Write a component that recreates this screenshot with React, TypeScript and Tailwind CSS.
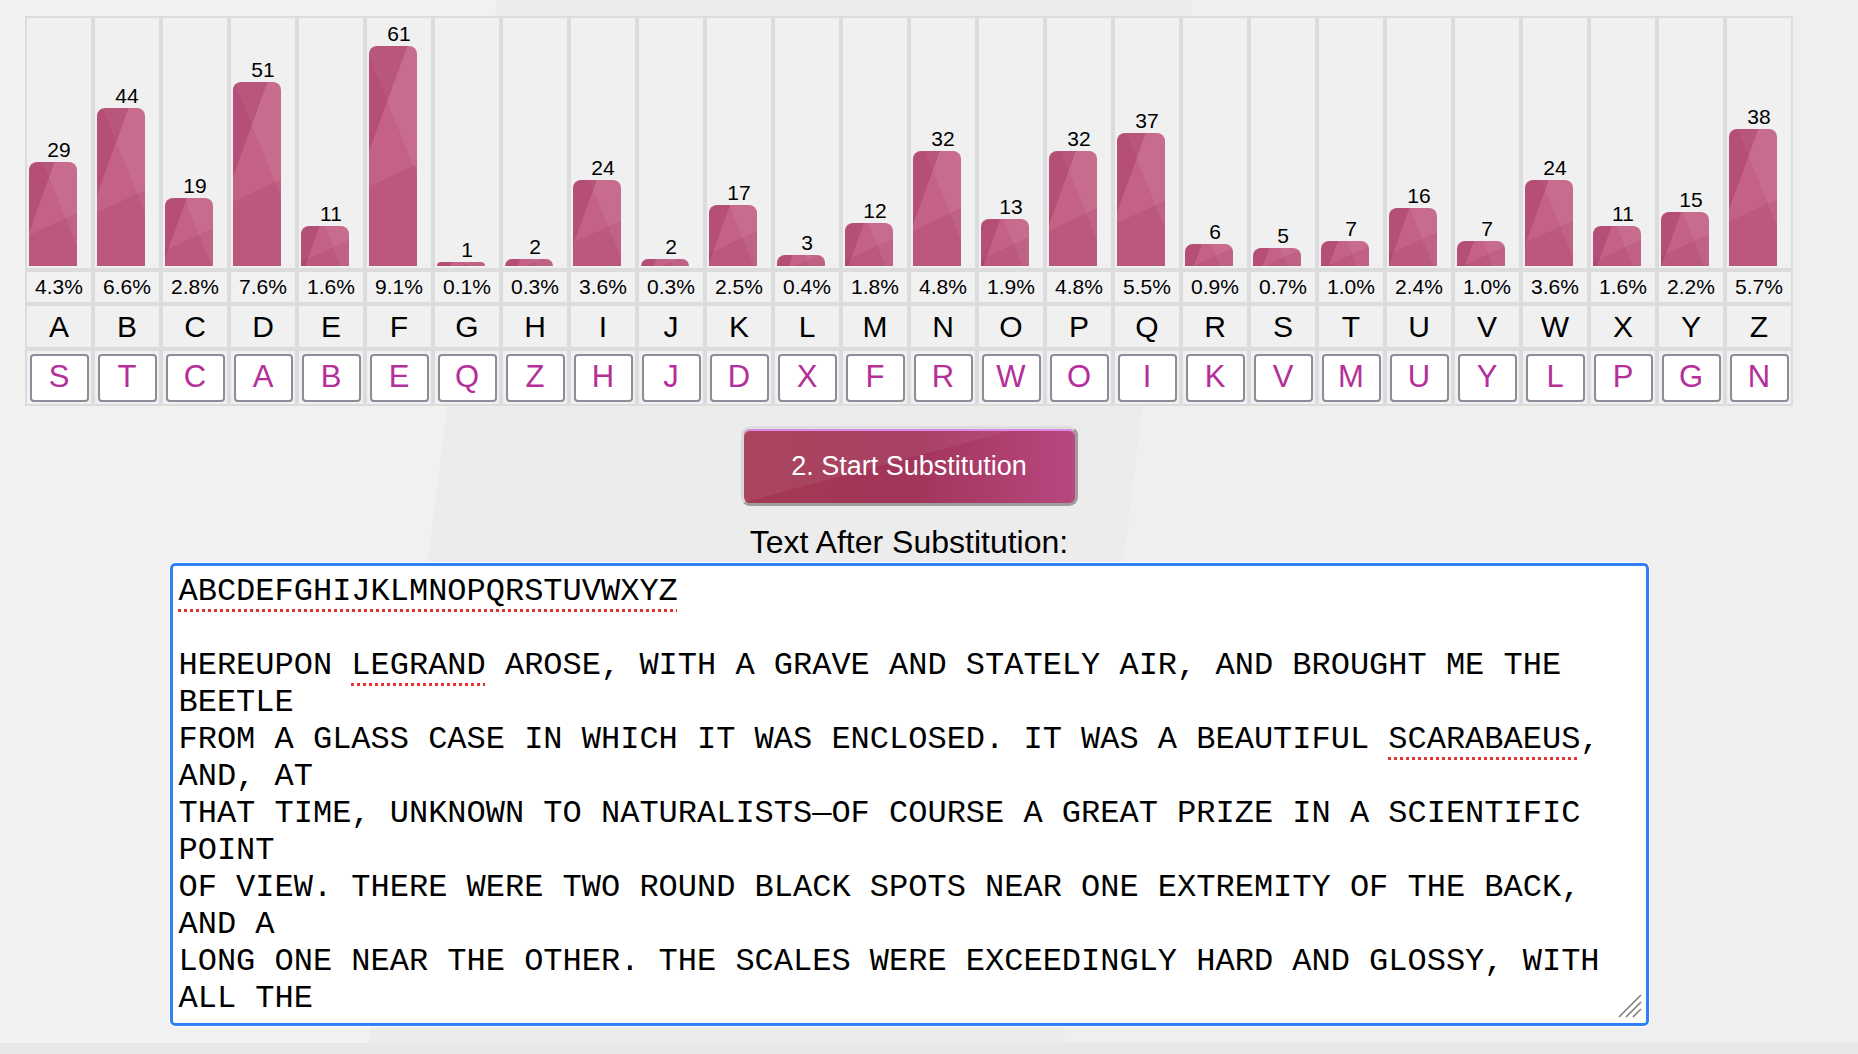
import React from 'react';

type Row = [string, number, string, string];

const rows: Row[] = [
  ['A', 29, '4.3%', 'S'],
  ['B', 44, '6.6%', 'T'],
  ['C', 19, '2.8%', 'C'],
  ['D', 51, '7.6%', 'A'],
  ['E', 11, '1.6%', 'B'],
  ['F', 61, '9.1%', 'E'],
  ['G', 1, '0.1%', 'Q'],
  ['H', 2, '0.3%', 'Z'],
  ['I', 24, '3.6%', 'H'],
  ['J', 2, '0.3%', 'J'],
  ['K', 17, '2.5%', 'D'],
  ['L', 3, '0.4%', 'X'],
  ['M', 12, '1.8%', 'F'],
  ['N', 32, '4.8%', 'R'],
  ['O', 13, '1.9%', 'W'],
  ['P', 32, '4.8%', 'O'],
  ['Q', 37, '5.5%', 'I'],
  ['R', 6, '0.9%', 'K'],
  ['S', 5, '0.7%', 'V'],
  ['T', 7, '1.0%', 'M'],
  ['U', 16, '2.4%', 'U'],
  ['V', 7, '1.0%', 'Y'],
  ['W', 24, '3.6%', 'L'],
  ['X', 11, '1.6%', 'P'],
  ['Y', 15, '2.2%', 'G'],
  ['Z', 38, '5.7%', 'N'],
];

// spellcheck-style dotted underline
const Typo = ({ children }: { children: React.ReactNode }) => (
  <span className="underline decoration-dotted decoration-[#e3342f] decoration-[3px] underline-offset-[9px]">
    {children}
  </span>
);

const FrequencyTable = () => (
  <div className="grid grid-cols-[repeat(26,64px)] gap-[4px] bg-[#dcdcdc] p-[2px]">
    {rows.map(([letter, count]) => (
      <div key={'bar' + letter} className="flex h-[250px] flex-col items-start justify-end bg-[#f0f0f0] pb-[2px]">
        <div className="w-full text-center text-[21px] leading-[24px] text-black">{count}</div>
        <div
          className="ml-[2px] w-[48px] rounded-t-[8px] bg-[#c46186] bg-[linear-gradient(110deg,rgba(150,40,85,0.32)_0_30%,transparent_30%),linear-gradient(155deg,transparent_58%,rgba(140,35,80,0.14)_58%),linear-gradient(68deg,transparent_62%,rgba(255,255,255,0.07)_62%)]"
          style={{ height: count * 3.6 }}
        />
      </div>
    ))}
    {rows.map(([letter, , pct]) => (
      <div key={'pct' + letter} className="flex h-[30px] items-center justify-center bg-[#f1f1f1] text-[21px] text-black">
        {pct}
      </div>
    ))}
    {rows.map(([letter]) => (
      <div key={'let' + letter} className="flex h-[41px] items-center justify-center bg-[#f0f0f0] text-[30px] text-black">
        {letter}
      </div>
    ))}
    {rows.map(([letter, , , sub]) => (
      <div key={'sub' + letter} className="flex h-[53px] items-center justify-center bg-[#f0f0f0]">
        <div className="flex h-[48px] w-[59px] items-center justify-center rounded-[4px] border-2 border-[#8e8b9b] bg-white text-[31px] text-[#b52f99]">
          {sub}
        </div>
      </div>
    ))}
  </div>
);

export default function App() {
  return (
    <div className="flex h-[1054px] w-full flex-col bg-[#efefef] bg-[linear-gradient(97deg,#f1f1f1_0_25%,#ececec_25%_60%,#efefef_60%)] font-['Liberation_Sans',Arial,sans-serif]">
      <div className="flex w-[1818px] flex-col items-center pt-[16px]">
        <FrequencyTable />

        <button className="mt-[20px] h-[80px] w-[337px] rounded-[9px] border-[3px] border-[#9d9d9d] border-l-[#d9d9d9] border-t-[#dedede] bg-[#a83d5e] bg-[linear-gradient(165deg,rgba(255,255,255,0.06)_0_45%,transparent_45%),linear-gradient(90deg,#a43a52,#a2345a_50%,#b8477f)] text-[27px] text-white shadow-[inset_0_2px_0_#d98ae6]">
          2. Start Substitution
        </button>

        <h2 className="mt-[18px] text-[32px] leading-[37px] text-black">Text After Substitution:</h2>

        <div className="relative mt-[2px] h-[463px] w-[1479px] overflow-hidden rounded-[5px] border-[3px] border-[#3181f6] bg-white px-[6px] pt-[7px] font-['Liberation_Mono','Courier_New',monospace] text-[32px] leading-[37px] whitespace-pre-wrap text-black outline outline-1 outline-white">
          <Typo>ABCDEFGHIJKLMNOPQRSTUVWXYZ</Typo>
          {'\n\nHEREUPON '}
          <Typo>LEGRAND</Typo>
          {' AROSE, WITH A GRAVE AND STATELY AIR, AND BROUGHT ME THE BEETLE\nFROM A GLASS CASE IN WHICH IT WAS ENCLOSED. IT WAS A BEAUTIFUL '}
          <Typo>SCARABAEUS</Typo>
          {', AND, AT\nTHAT TIME, UNKNOWN TO NATURALISTS\u2014OF COURSE A GREAT PRIZE IN A SCIENTIFIC POINT\nOF VIEW. THERE WERE TWO ROUND BLACK SPOTS NEAR ONE EXTREMITY OF THE BACK, AND A\nLONG ONE NEAR THE OTHER. THE SCALES WERE EXCEEDINGLY HARD AND GLOSSY, WITH ALL THE\nAPPEARANCE OF BURNISHED GOLD. THE WEIGHT OF THE INSECT WAS VERY REMARKABLE, AND,\nTAKING ALL THINGS INTO CONSIDERATION, I COULD HARDLY BLAME JUPITER FOR HIS OPINION'}
          <svg className="absolute right-[4px] bottom-[5px]" width="24" height="24" viewBox="0 0 24 24">
            <path d="M1 23 L23 1 M8 23 L23 8 M15 23 L23 15" stroke="#7d7d7d" strokeWidth="1.6" fill="none" />
          </svg>
        </div>
      </div>
      <div className="mt-auto h-[11px] w-full bg-[#e8e8e8]" />
    </div>
  );
}
